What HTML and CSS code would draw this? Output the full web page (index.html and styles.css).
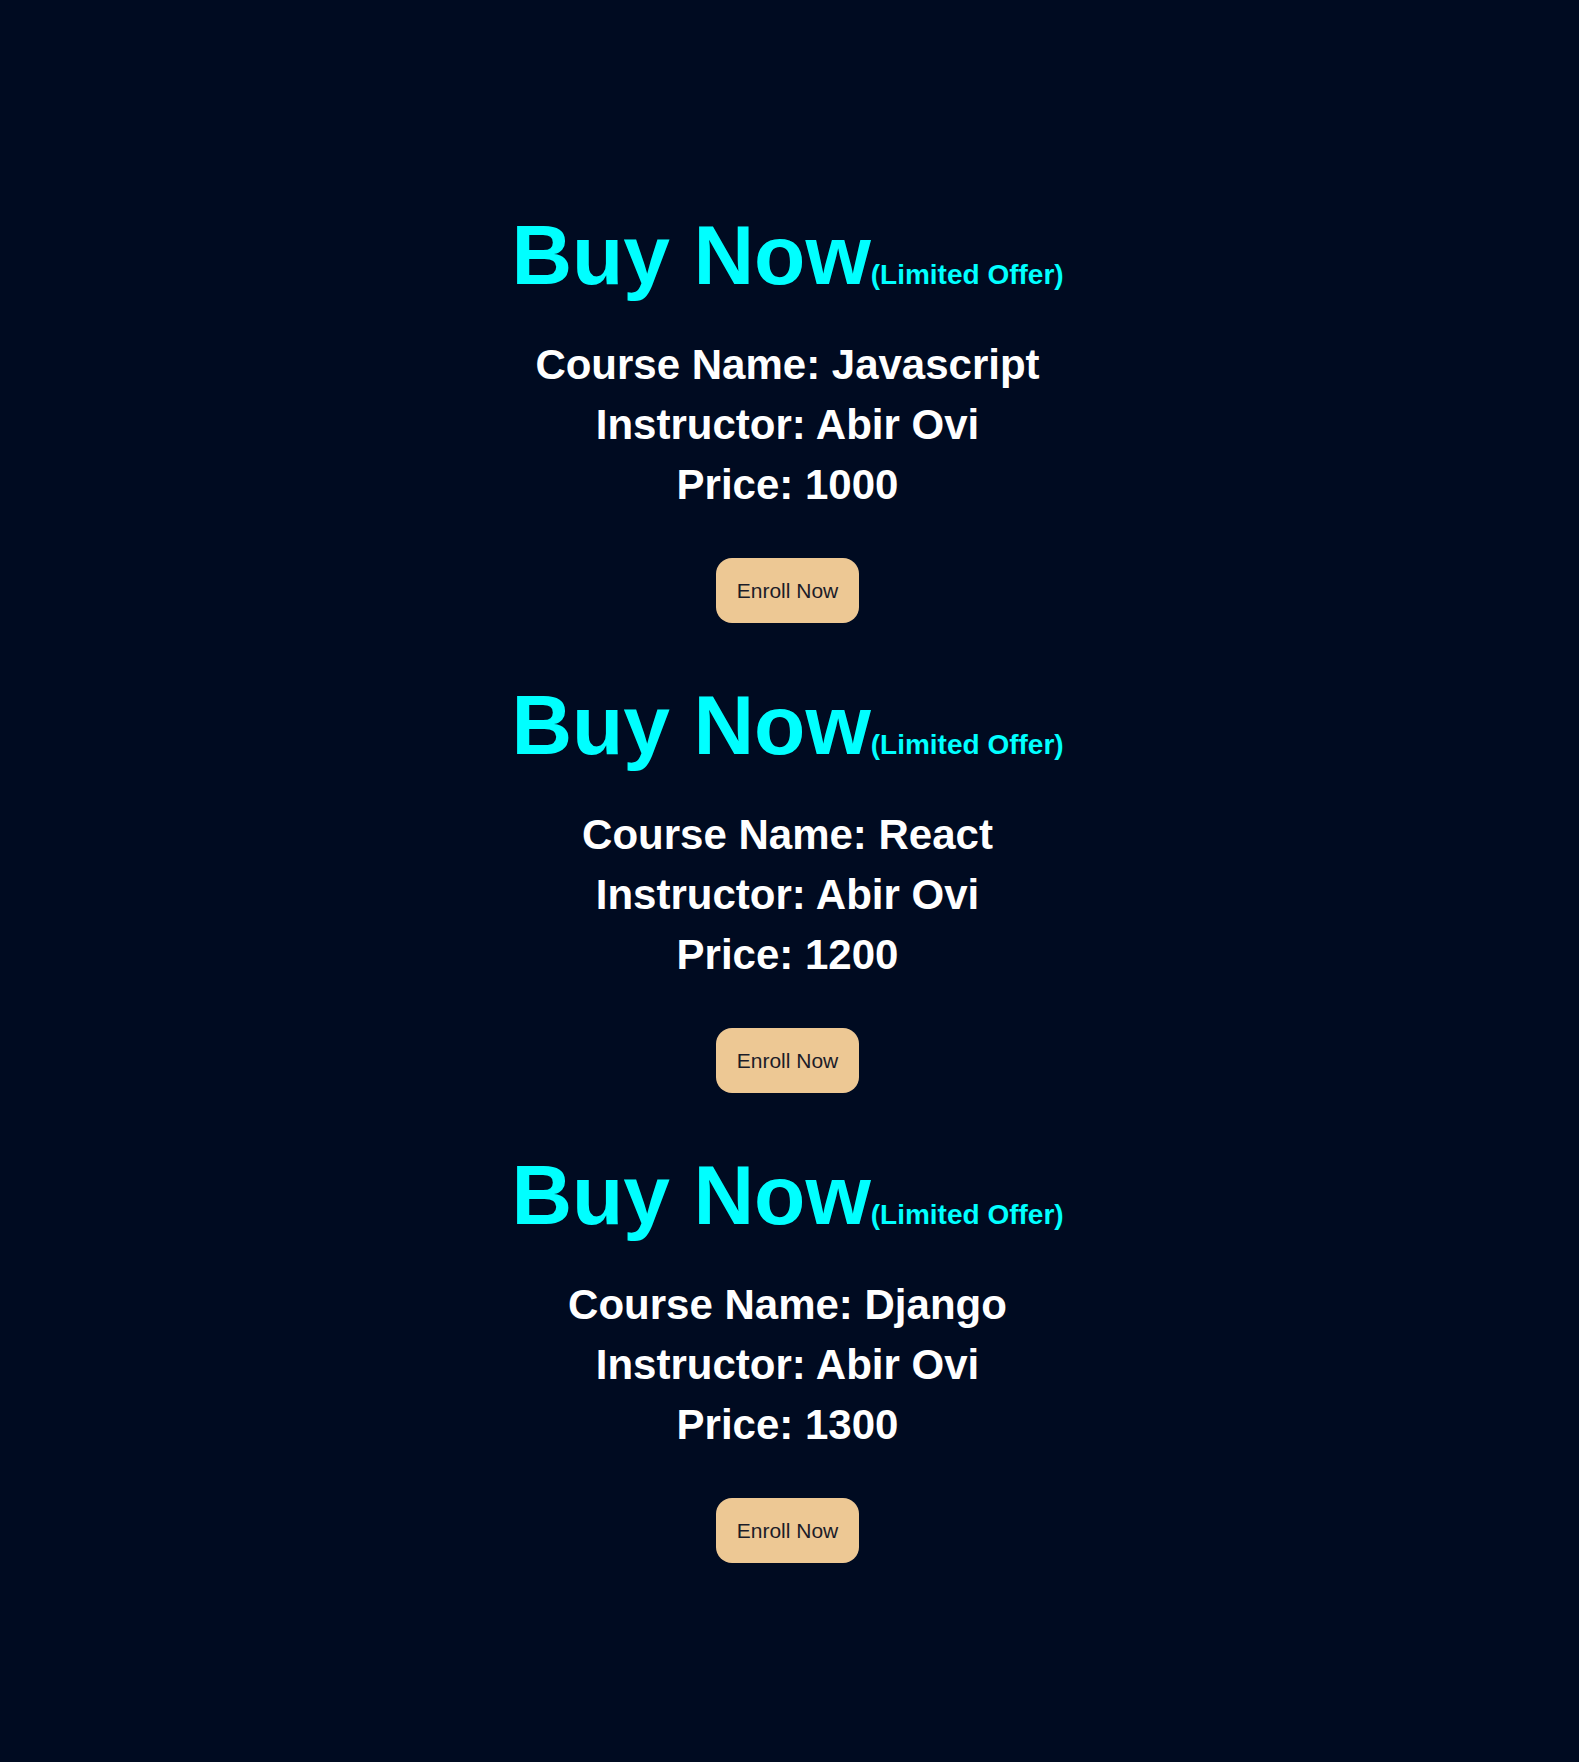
FILE: index.html
```html
<!DOCTYPE html>
<html lang="en">
<head>
<meta charset="utf-8">
<title>Buy Now</title>
<link rel="stylesheet" href="styles.css">
</head>
<body>
<main class="courses">
  <section class="card">
    <h1 class="title">Buy Now<span class="offer">(Limited Offer)</span></h1>
    <div class="info">
      <p class="line">Course Name: Javascript</p>
      <p class="line">Instructor: Abir Ovi</p>
      <p class="line">Price: 1000</p>
    </div>
    <button class="enroll">Enroll Now</button>
  </section>
  <section class="card">
    <h1 class="title">Buy Now<span class="offer">(Limited Offer)</span></h1>
    <div class="info">
      <p class="line">Course Name: React</p>
      <p class="line">Instructor: Abir Ovi</p>
      <p class="line">Price: 1200</p>
    </div>
    <button class="enroll">Enroll Now</button>
  </section>
  <section class="card">
    <h1 class="title">Buy Now<span class="offer">(Limited Offer)</span></h1>
    <div class="info">
      <p class="line">Course Name: Django</p>
      <p class="line">Instructor: Abir Ovi</p>
      <p class="line">Price: 1300</p>
    </div>
    <button class="enroll">Enroll Now</button>
  </section>
</main>
</body>
</html>
```
FILE: styles.css
```css
html, body {
  margin: 0;
  padding: 0;
  background: #000b21;
}

body {
  font-family: "Liberation Sans", Arial, sans-serif;
  min-height: 1762px;
}

.courses {
  display: flex;
  flex-direction: column;
  align-items: center;
  padding-top: 207px;
  padding-right: 4px;
}

.card {
  display: flex;
  flex-direction: column;
  align-items: center;
  height: 470px;
}

.title {
  margin: 0;
  font-size: 84px;
  line-height: 96px;
  font-weight: 700;
  color: #00ffff;
  white-space: nowrap;
}

.offer {
  font-size: 28px;
  font-weight: 700;
}

.info {
  margin-top: 12px;
  text-align: center;
}

.line {
  margin: 0;
  font-size: 42px;
  line-height: 60px;
  font-weight: 700;
  color: #ffffff;
}

.enroll {
  margin-top: 43px;
  padding: 20px 21px;
  font-family: "Liberation Sans", Arial, sans-serif;
  font-size: 21px;
  line-height: 25px;
  color: #1c1c28;
  background: #edc894;
  border: none;
  border-radius: 16px;
  cursor: pointer;
}
```
